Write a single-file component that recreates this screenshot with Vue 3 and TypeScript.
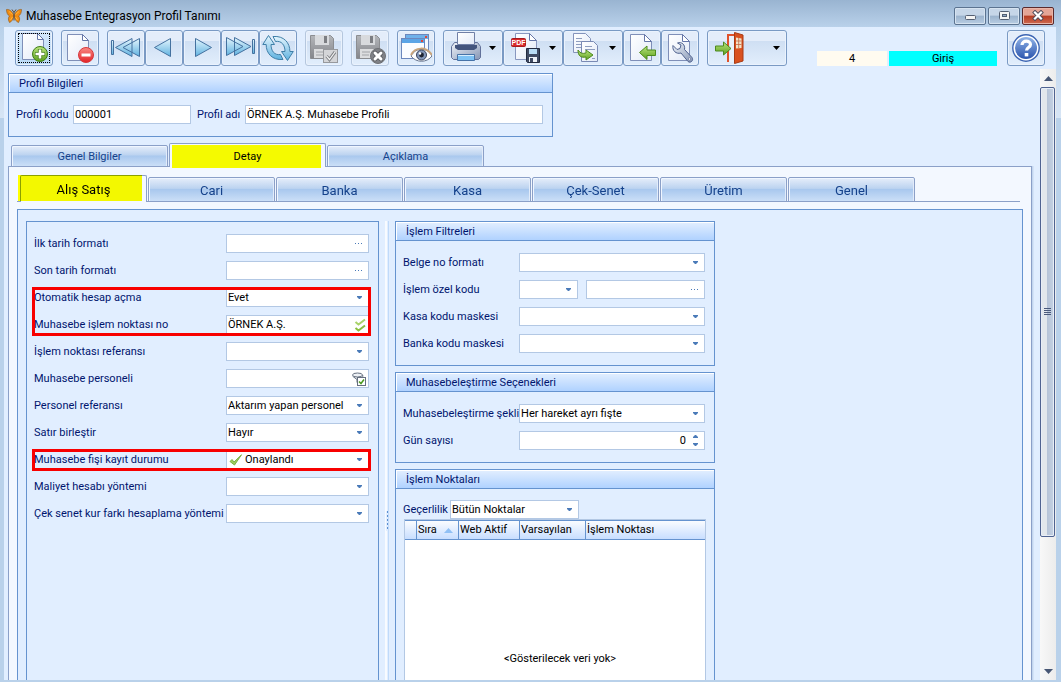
<script setup lang="ts">
import { ref } from 'vue'

type FieldKind = 'dots' | 'select' | 'checks' | 'funnel'

interface Field {
  id: string
  label: string
  kind: FieldKind
  value: string
  approved?: boolean
}

interface FieldGroup {
  marked: boolean
  fields: Field[]
}

const profileCode = ref('000001')
const profileName = ref('ÖRNEK A.Ş. Muhasebe Profili')

const outerTabs = ['Genel Bilgiler', 'Detay', 'Açıklama']
const activeOuter = ref('Detay')
const innerTabs = ['Alış Satış', 'Cari', 'Banka', 'Kasa', 'Çek-Senet', 'Üretim', 'Genel']
const activeInner = ref('Alış Satış')

const groups = ref<FieldGroup[]>([
  {
    marked: false,
    fields: [
      { id: 'ilk', label: 'İlk tarih formatı', kind: 'dots', value: '' },
      { id: 'son', label: 'Son tarih formatı', kind: 'dots', value: '' },
    ],
  },
  {
    marked: true,
    fields: [
      { id: 'otomatik', label: 'Otomatik hesap açma', kind: 'select', value: 'Evet' },
      { id: 'nokta', label: 'Muhasebe işlem noktası no', kind: 'checks', value: 'ÖRNEK A.Ş.' },
    ],
  },
  {
    marked: false,
    fields: [
      { id: 'noktaref', label: 'İşlem noktası referansı', kind: 'select', value: '' },
      { id: 'personel', label: 'Muhasebe personeli', kind: 'funnel', value: '' },
      { id: 'personelref', label: 'Personel referansı', kind: 'select', value: 'Aktarım yapan personel' },
      { id: 'satir', label: 'Satır birleştir', kind: 'select', value: 'Hayır' },
    ],
  },
  {
    marked: true,
    fields: [
      { id: 'durum', label: 'Muhasebe fişi kayıt durumu', kind: 'select', value: 'Onaylandı', approved: true },
    ],
  },
  {
    marked: false,
    fields: [
      { id: 'maliyet', label: 'Maliyet hesabı yöntemi', kind: 'select', value: '' },
      { id: 'kurfarki', label: 'Çek senet kur farkı hesaplama yöntemi', kind: 'select', value: '' },
    ],
  },
])

const days = ref(0)
</script>

<template>
  <div class="window">
    <svg class="defs" width="0" height="0" aria-hidden="true">
      <defs>
        <linearGradient id="gPage" x1="0" y1="0" x2="1" y2="1">
          <stop offset="0" stop-color="#ffffff" /><stop offset="1" stop-color="#e3eaf8" />
        </linearGradient>
        <linearGradient id="gBlue" x1="0" y1="0" x2="0" y2="1">
          <stop offset="0" stop-color="#e4f5fd" /><stop offset="1" stop-color="#5fb2e0" />
        </linearGradient>
        <linearGradient id="gGreen" x1="0" y1="0" x2="0" y2="1">
          <stop offset="0" stop-color="#b9e57c" /><stop offset="1" stop-color="#5c9f1e" />
        </linearGradient>
        <linearGradient id="gRed" x1="0" y1="0" x2="0" y2="1">
          <stop offset="0" stop-color="#f98a84" /><stop offset="1" stop-color="#e32227" />
        </linearGradient>
        <linearGradient id="gGrey" x1="0" y1="0" x2="0" y2="1">
          <stop offset="0" stop-color="#b4b6ba" /><stop offset="1" stop-color="#84868b" />
        </linearGradient>
        <linearGradient id="gHelp" x1="0" y1="0" x2="0" y2="1">
          <stop offset="0" stop-color="#8fb2e6" /><stop offset="1" stop-color="#2c55ae" />
        </linearGradient>
        <linearGradient id="gMetal" x1="0" y1="0" x2="1" y2="1">
          <stop offset="0" stop-color="#f0f4fa" /><stop offset="1" stop-color="#8595b4" />
        </linearGradient>
      </defs>
    </svg>

    <header class="titlebar">
      <svg class="logo" width="16" height="16" viewBox="0 0 16 16" aria-hidden="true">
        <path d="M7.500 6.500C6 3 3 1 .5 1.500c0 3 1 5.500 3 6.500C2 9.500 2 12 3.500 14.500c2-.5 3.500-3 4-5.500zM8.500 6.500C10 3 13 1 15.500 1.500c0 3-1 5.500-3 6.500 1.500 1.500 1.500 4 0 6.500-2-.5-3.500-3-4-5.500z" fill="#f08c14" stroke="#8a5212" stroke-width=".6" />
        <path d="M6.500 6.500 3 3.500M9.500 6.500 13 3.500M6.500 9l-2 3M9.500 9l2 3" stroke="#ffb43c" fill="none" />
        <path d="M8 4.500v8M6 1.500l2 3 2-3" stroke="#5a4630" stroke-width="1" fill="none" />
      </svg>
      <h1>Muhasebe Entegrasyon Profil Tanımı</h1>
      <div class="caption-buttons">
        <button type="button" aria-label="Simge durumuna küçült">
          <svg width="14" height="12" viewBox="0 0 14 12"><rect x="2.500" y="5.500" width="10" height="4" rx="1" fill="#f4f4f4" stroke="#545f72" /></svg>
        </button>
        <button type="button" aria-label="Ekranı kapla">
          <svg width="14" height="12" viewBox="0 0 14 12"><rect x="2.500" y="1.500" width="10" height="8" rx="1" fill="#f4f4f4" stroke="#545f72" /><rect x="5.500" y="4.500" width="4" height="2" fill="#8fa9c8" stroke="#545f72" /></svg>
        </button>
        <button type="button" class="close" aria-label="Kapat">
          <svg width="14" height="12" viewBox="0 0 14 12"><path d="M4 2.500 10 8.500M10 2.500 4 8.500" stroke="#4f4a58" stroke-width="4" stroke-linecap="square" /><path d="M4 2.500 10 8.500M10 2.500 4 8.500" stroke="#fff" stroke-width="2.200" stroke-linecap="square" /></svg>
        </button>
      </div>
    </header>

    <div class="client">
      <div class="toolbar">
        <button type="button" class="tool focused" aria-label="Yeni">
          <svg width="32" height="32" viewBox="0 0 32 32">
            <path d="M4.500 1.500h15l6 6v20h-21z" fill="url(#gPage)" stroke="#7f8fb8" />
            <path d="M19.500 1.500v6h6z" fill="#fff" stroke="#6576a8" />
            <circle cx="22" cy="22" r="7.500" fill="url(#gGreen)" stroke="#3f7d18" />
            <path d="M22 17v10M17 22h10" stroke="#477f1c" stroke-width="4.200" /><path d="M22 17.500v9M17.500 22h9" stroke="#fff" stroke-width="2.600" />
          </svg>
        </button>
        <button type="button" class="tool" aria-label="Sil">
          <svg width="32" height="32" viewBox="0 0 32 32">
            <path d="M3.500 2.500h15l6 6v20h-21z" fill="url(#gPage)" stroke="#7f8fb8" />
            <path d="M18.500 2.500v6h6z" fill="#fff" stroke="#6576a8" />
            <circle cx="22" cy="23" r="7.500" fill="url(#gRed)" stroke="#d8383c" />
            <rect x="17.500" y="21.500" width="9" height="3" fill="#fff" />
          </svg>
        </button>

        <div class="toolgroup">
          <button type="button" class="tool" aria-label="İlk kayıt">
            <svg width="32" height="32" viewBox="0 0 32 32" fill="url(#gBlue)" stroke="#44719f" stroke-linejoin="round">
              <rect x="1.500" y="8.500" width="2" height="14" /><path d="M5.500 15.500 22 6.500v18zM13 15.500 29.500 6.500v18z" />
            </svg>
          </button>
          <button type="button" class="tool" aria-label="Önceki kayıt">
            <svg width="32" height="32" viewBox="0 0 32 32" fill="url(#gBlue)" stroke="#44719f" stroke-linejoin="round"><path d="M6.500 15.500 22.500 6.500v18z" /></svg>
          </button>
          <button type="button" class="tool" aria-label="Sonraki kayıt">
            <svg width="32" height="32" viewBox="0 0 32 32" fill="url(#gBlue)" stroke="#44719f" stroke-linejoin="round"><path d="M25.500 15.500 9.500 6.500v18z" /></svg>
          </button>
          <button type="button" class="tool" aria-label="Son kayıt">
            <svg width="32" height="32" viewBox="0 0 32 32" fill="url(#gBlue)" stroke="#44719f" stroke-linejoin="round">
              <path d="M19 14.500 2.500 5.500v18zM27 14.500 10.500 5.500v18z" /><rect x="28.500" y="7.500" width="2" height="14" />
            </svg>
          </button>
          <button type="button" class="tool" aria-label="Yenile">
            <svg width="32" height="32" viewBox="0 0 32 32" fill="url(#gBlue)" stroke="#3f7fa8" stroke-linejoin="round">
              <path d="M6.500 3.500.8 12.500h3.400C4 21 10 28.500 21 27.500l-2.500-5C12.500 23.500 9 19 9 12.500h3.500z" />
              <path d="M25.500 28.500 31.300 19.500h-3.400C28 11 22 3.500 11 4.500l2.500 5C19.500 8.500 23 13 23 19.500h-3.500z" />
            </svg>
          </button>
        </div>

        <button type="button" class="tool" disabled aria-label="Kaydet">
          <svg width="32" height="32" viewBox="0 0 32 32">
            <path d="M2.500 3.500h20l3 3v20h-23z" fill="url(#gGrey)" stroke="#8b8d91" />
            <rect x="7" y="3" width="14" height="10" fill="#d8dadd" /><rect x="16" y="4" width="3" height="7" fill="#7c7e83" />
            <rect x="6" y="17" width="16" height="9" fill="#dcdddf" /><path d="M8 20h8M8 23h7" stroke="#a2a4a8" />
            <rect x="15.500" y="17.500" width="14" height="13" fill="#d4d5d8" stroke="#97999d" />
            <path d="m18.500 24 3 3.500 5.500-7.500" fill="none" stroke="#7e8084" stroke-width="3" /><path d="m18.500 24 3 3.500 5.500-7.500" fill="none" stroke="#f3f3f4" stroke-width="1.200" />
          </svg>
        </button>
        <button type="button" class="tool" disabled aria-label="Vazgeç">
          <svg width="32" height="32" viewBox="0 0 32 32">
            <path d="M2.500 3.500h20l3 3v20h-23z" fill="url(#gGrey)" stroke="#8b8d91" />
            <rect x="7" y="3" width="14" height="10" fill="#d8dadd" /><rect x="16" y="4" width="3" height="7" fill="#7c7e83" />
            <rect x="6" y="17" width="16" height="9" fill="#dcdddf" /><path d="M8 20h8M8 23h7" stroke="#a2a4a8" />
            <circle cx="24" cy="24" r="7.500" fill="#808287" stroke="#6f7175" />
            <path d="m21 21 6 6M27 21l-6 6" stroke="#5e6064" stroke-width="4.600" stroke-linecap="round" /><path d="m21 21 6 6M27 21l-6 6" stroke="#fff" stroke-width="3" stroke-linecap="round" />
          </svg>
        </button>
        <button type="button" class="tool" aria-label="İzle">
          <svg width="32" height="32" viewBox="0 0 32 32">
            <rect x="5.500" y="2.500" width="23" height="20" fill="#f6f9ff" stroke="#6c87bd" /><rect x="6" y="3" width="22" height="4" fill="#6fb1ea" /><rect x="25" y="4" width="2" height="2" fill="#e0483a" />
            <rect x="1.500" y="6.500" width="23" height="20" fill="#fbfcff" stroke="#6c87bd" /><rect x="2" y="7" width="22" height="4" fill="#5ba4e6" /><rect x="21" y="8" width="2" height="2" fill="#e0483a" />
            <path d="M11 24c5-9 16-9 21 0-5 7-16 7-21 0z" fill="#fff" stroke="#66748f" />
            <path d="M11 23c4-8 15-9 21 0" fill="none" stroke="#c9a57c" stroke-width="2" />
            <circle cx="21.500" cy="23" r="5" fill="#8296b8" stroke="#39455f" /><circle cx="21.500" cy="23" r="2.400" fill="#1d2331" /><circle cx="20" cy="21.500" r="1.200" fill="#fff" />
          </svg>
        </button>

        <div class="toolgroup">
          <button type="button" class="tool menu" aria-label="Yazdır">
            <svg width="32" height="32" viewBox="0 0 32 32">
              <path d="M4.500 10.500h23l3 4v11l-2 2h-25l-2-2v-11z" fill="url(#gMetal)" stroke="#62719a" />
              <path d="M7.500.5h17v12h-17z" fill="url(#gPage)" stroke="#707fa6" /><path d="M5 13h22v3l-3 2H8l-3-2z" fill="#43547d" />
              <path d="M7.500 22.500h17v6h-17z" fill="#7ec2f4" stroke="#4773a8" /><path d="M8 23.500h16" stroke="#d6edfd" />
            </svg>
            <svg class="arrow" width="7" height="4" viewBox="0 0 7 4"><path d="M0 0h7L3.500 4z" /></svg>
          </button>
          <button type="button" class="tool menu" aria-label="PDF olarak kaydet">
            <svg width="32" height="32" viewBox="0 0 32 32">
              <path d="M5.500 1.500h14l7 7v19h-21z" fill="url(#gPage)" stroke="#8897bf" /><path d="M19.500 1.500v7h7z" fill="#fff" stroke="#6576a8" />
              <rect x="1.500" y="6.500" width="14" height="8" rx="1" fill="#d92b2b" stroke="#a51b1f" />
              <text x="8.500" y="13" text-anchor="middle" font-family="Liberation Sans, sans-serif" font-size="7" font-weight="bold" fill="#fff">PDF</text>
              <path d="M16.500 16.500h13v14h-12l-1-1z" fill="#3f4a63" stroke="#222b40" /><rect x="19" y="17" width="8" height="5" fill="#b9dcf5" /><rect x="19" y="25" width="8" height="5" fill="#eef2f8" /><rect x="20" y="26" width="3" height="4" fill="#3f4a63" />
            </svg>
            <svg class="arrow" width="7" height="4" viewBox="0 0 7 4"><path d="M0 0h7L3.500 4z" /></svg>
          </button>
          <button type="button" class="tool menu" aria-label="Kopyala">
            <svg width="32" height="32" viewBox="0 0 32 32">
              <path d="M3.500 1.500h12l5 5v14h-17z" fill="url(#gPage)" stroke="#8493bb" /><path d="M6 6.500h6M6 9.500h9M6 12.500h5M6 15.500h5" stroke="#8e9dbf" />
              <path d="M11.500 9.500h12l4 4v16h-16z" fill="url(#gPage)" stroke="#7a8ab4" /><path d="M15 14.500h7M15 17.500h10M22 26.500h3" stroke="#8e9dbf" />
              <path d="M8 18c2 3 4 4 8 3v-3l7 5-7 5v-3c-5 1-8-1-8-7z" fill="url(#gGreen)" stroke="#4d8a1e" />
            </svg>
            <svg class="arrow" width="7" height="4" viewBox="0 0 7 4"><path d="M0 0h7L3.500 4z" /></svg>
          </button>
          <button type="button" class="tool" aria-label="İçe aktar">
            <svg width="32" height="32" viewBox="0 0 32 32">
              <path d="M4.500 2.500h14l7 7v19h-21z" fill="url(#gPage)" stroke="#7f8fb8" /><path d="M18.500 2.500v7h7z" fill="#fff" stroke="#6576a8" />
              <path d="M13.500 20.500 21 14v4h8.500v5.500H21v4z" fill="url(#gGreen)" stroke="#4d8a1e" />
            </svg>
          </button>
          <button type="button" class="tool" aria-label="Ayarlar">
            <svg width="32" height="32" viewBox="0 0 32 32">
              <path d="M4.500 2.500h14l7 7v19h-21z" fill="url(#gPage)" stroke="#7f8fb8" /><path d="M18.500 2.500v7h7z" fill="#fff" stroke="#6576a8" />
              <path d="M9 13.500l4 4 3-1 1-3.500-3.500-2c4-1.500 8 1.500 7 6.500l7.500 8c2 3-1.500 6-4 4L17 21c-5 1.500-9-2.500-8-7.500z" fill="url(#gMetal)" stroke="#50628f" /><circle cx="25.500" cy="27" r="1.200" fill="#fff" stroke="#50628f" stroke-width=".6" />
            </svg>
          </button>
        </div>

        <button type="button" class="tool menu exit" aria-label="Çıkış">
          <svg width="32" height="32" viewBox="0 0 32 32">
            <path d="M14 30V3h8" fill="none" stroke="#e0522b" stroke-width="2" /><path d="M15.500 30V4.500h5V30z" fill="#e9f1fb" />
            <path d="M20.500.5 29 3v26l-8.500 2.500z" fill="#d9511f" stroke="#a93b14" />
            <path d="M22 5.500 27.500 6.500v9.500L22 16.500z" fill="#f3e3c8" /><path d="M24.700 6v10M22 9h5.500M22 12.500h5.500" stroke="#c46a44" stroke-width=".8" />
            <path d="M1.500 14h8v-4l7.500 6.500-7.500 6.500v-4h-8z" fill="url(#gGreen)" stroke="#4d8a1e" />
          </svg>
          <svg class="arrow" width="7" height="4" viewBox="0 0 7 4"><path d="M0 0h7L3.500 4z" /></svg>
        </button>

        <div class="status">
          <span class="count">4</span>
          <span class="mode">Giriş</span>
        </div>
        <button type="button" class="tool help" aria-label="Yardım">
          <svg width="32" height="32" viewBox="0 0 32 32">
            <circle cx="16" cy="16" r="13.200" fill="#fff" stroke="#3d65b3" stroke-width="1.400" /><circle cx="16" cy="16" r="11" fill="url(#gHelp)" />
            <path d="M12 13c0-5 8.500-5 8.500-.5 0 3-4 3-4 6" fill="none" stroke="#fff" stroke-width="3.200" /><rect x="14.700" y="21" width="3.600" height="3.400" fill="#fff" />
          </svg>
        </button>
      </div>

      <div class="scroller">
        <main>
          <section class="group profile">
            <h2>Profil Bilgileri</h2>
            <div class="profile-row">
              <label for="kod">Profil kodu</label>
              <div class="control code"><input id="kod" v-model="profileCode" type="text" /></div>
              <label for="ad">Profil adı</label>
              <div class="control"><input id="ad" v-model="profileName" type="text" /></div>
            </div>
          </section>

          <div class="tabs outer" role="tablist">
            <button
              v-for="t in outerTabs" :key="t" type="button" role="tab"
              :aria-selected="t === activeOuter" :class="{ active: t === activeOuter }" @click="activeOuter = t"
            ><span>{{ t }}</span></button>
          </div>

          <div class="outer-panel">
            <div class="tabs inner" role="tablist">
              <button
                v-for="t in innerTabs" :key="t" type="button" role="tab"
                :aria-selected="t === activeInner" :class="{ active: t === activeInner }" @click="activeInner = t"
              ><span>{{ t }}</span></button>
            </div>

            <div class="inner-panel">
              <form class="group fields" @submit.prevent>
                <div v-for="(g, i) in groups" :key="i" class="block" :class="{ marked: g.marked }">
                  <div v-for="f in g.fields" :key="f.id" class="row">
                    <label :for="f.id">{{ f.label }}</label>
                    <div class="control" :class="{ approved: f.approved }">
                      <svg v-if="f.approved" class="tick" width="14" height="12" viewBox="0 0 14 12"><path d="M1 7.500 3 5.500l2 2.500L12.500.8 5.500 11z" fill="#9ccb5c" stroke="#7fb043" /></svg>
                      <select v-if="f.kind === 'select'" :id="f.id" v-model="f.value">
                        <option>{{ f.value }}</option>
                      </select>
                      <input v-else :id="f.id" v-model="f.value" type="text" />
                      <svg v-if="f.kind === 'select'" class="mark" width="5" height="3" viewBox="0 0 5 3"><path d="M0 0h5v1L3 3H2L0 1z" fill="#4a7ab8" /></svg>
                      <span v-else-if="f.kind === 'dots'" class="mark dots"></span>
                      <svg v-else-if="f.kind === 'checks'" class="mark near" width="12" height="14" viewBox="0 0 12 14" fill="none" stroke="#a9d36a" stroke-width="2"><path d="m1.500 4 3 2.500L11 1.500" /><path d="m1.500 10 3 2.500L11 7.500" stroke="#8abf40" /></svg>
                      <svg v-else class="mark near" width="14" height="14" viewBox="0 0 14 14" fill="#eef1f5" stroke="#66707f"><path d="M1 3.500v1l4 3v3l2 1.500V8l4-3.500v-1z" /><ellipse cx="5.500" cy="3" rx="5" ry="2" /><rect x="5.500" y="5.500" width="8" height="8" fill="#fff" /><path d="m7 9.500 2 2 3-4" stroke="#4c9a20" stroke-width="1.500" fill="none" /></svg>
                    </div>
                  </div>
                </div>
              </form>

              <div class="splitter" role="separator"><i></i></div>

              <div class="side">
                <section class="group">
                  <h2>İşlem Filtreleri</h2>
                  <div class="body">
                    <div class="row">
                      <label for="belge">Belge no formatı</label>
                      <div class="control"><select id="belge"><option></option></select><svg class="mark" width="5" height="3" viewBox="0 0 5 3"><path d="M0 0h5v1L3 3H2L0 1z" fill="#4a7ab8" /></svg></div>
                    </div>
                    <div class="row">
                      <label for="ozel">İşlem özel kodu</label>
                      <div class="control short"><select id="ozel"><option></option></select><svg class="mark" width="5" height="3" viewBox="0 0 5 3"><path d="M0 0h5v1L3 3H2L0 1z" fill="#4a7ab8" /></svg></div>
                      <div class="control"><input type="text" aria-label="İşlem özel kodu değeri" /><span class="mark dots"></span></div>
                    </div>
                    <div class="row">
                      <label for="kasa">Kasa kodu maskesi</label>
                      <div class="control"><select id="kasa"><option></option></select><svg class="mark" width="5" height="3" viewBox="0 0 5 3"><path d="M0 0h5v1L3 3H2L0 1z" fill="#4a7ab8" /></svg></div>
                    </div>
                    <div class="row">
                      <label for="banka">Banka kodu maskesi</label>
                      <div class="control"><select id="banka"><option></option></select><svg class="mark" width="5" height="3" viewBox="0 0 5 3"><path d="M0 0h5v1L3 3H2L0 1z" fill="#4a7ab8" /></svg></div>
                    </div>
                  </div>
                </section>

                <section class="group">
                  <h2>Muhasebeleştirme Seçenekleri</h2>
                  <div class="body">
                    <div class="row">
                      <label for="sekil">Muhasebeleştirme şekli</label>
                      <div class="control"><select id="sekil"><option>Her hareket ayrı fişte</option></select><svg class="mark" width="5" height="3" viewBox="0 0 5 3"><path d="M0 0h5v1L3 3H2L0 1z" fill="#4a7ab8" /></svg></div>
                    </div>
                    <div class="row">
                      <label for="gun">Gün sayısı</label>
                      <div class="control number">
                        <input id="gun" v-model="days" type="number" />
                        <svg class="mark" width="5" height="11" viewBox="0 0 5 11" fill="#4a7ab8"><path d="M0 3V2L2 0h1l2 2v1zM0 8v1l2 2h1l2-2V8z" /></svg>
                      </div>
                    </div>
                  </div>
                </section>

                <section class="group points">
                  <h2>İşlem Noktaları</h2>
                  <div class="body">
                    <div class="row">
                      <label for="gecerlilik">Geçerlilik</label>
                      <div class="control"><select id="gecerlilik"><option>Bütün Noktalar</option></select><svg class="mark" width="5" height="3" viewBox="0 0 5 3"><path d="M0 0h5v1L3 3H2L0 1z" fill="#4a7ab8" /></svg></div>
                    </div>
                    <div class="gridbox">
                      <table>
                        <colgroup><col class="c0" /><col class="c1" /><col class="c2" /><col class="c3" /><col /></colgroup>
                        <thead>
                          <tr>
                            <th aria-label="Seçim"></th>
                            <th><div class="sorted">Sıra<svg width="9" height="5" viewBox="0 0 9 5"><path d="M0 5 4.500 0 9 5z" fill="#90c0f5" /></svg></div></th>
                            <th>Web Aktif</th>
                            <th>Varsayılan</th>
                            <th>İşlem Noktası</th>
                          </tr>
                        </thead>
                      </table>
                      <p>&lt;Gösterilecek veri yok&gt;</p>
                    </div>
                  </div>
                </section>
              </div>
            </div>
          </div>
        </main>

        <div class="scrollbar">
          <button type="button" aria-label="Yukarı kaydır"><svg width="9" height="5" viewBox="0 0 9 5"><path d="M0 5 4.500 0 9 5z" fill="#475674" /></svg></button>
          <div class="thumb"><i></i></div>
          <div class="rest"></div>
          <button type="button" aria-label="Aşağı kaydır"><svg width="9" height="5" viewBox="0 0 9 5"><path d="M0 0h9L4.500 5z" fill="#475674" /></svg></button>
        </div>
      </div>
    </div>
  </div>
</template>

<style>
body { margin: 0; }
</style>

<style scoped>
* { box-sizing: border-box; }
.window {
  --line: #6593cf;
  --edge: #b3c8e4;
  --navy: #00156e;
  --face: #e1eeff;
  height: 100vh;
  display: flex;
  flex-direction: column;
  padding: 0 5px 2px 4px;
  overflow: hidden;
  background: linear-gradient(#99b4d1 0, #b9d1ea 27px, #d7e5f5 118px, #b9d1ea 118px);
  font: 11px/14px Roboto, "Noto Sans", sans-serif;
  color: #000;
}
.defs { position: absolute; }
button, input, select { font: inherit; color: inherit; margin: 0; }
button { padding: 0; }

.titlebar { flex: none; height: 27px; display: flex; align-items: center; padding: 4px 2px 0 2px; gap: 4px; }
.titlebar h1 { flex: 1; margin: 0; font-size: 12px; font-weight: normal; line-height: 16px; }
.caption-buttons { display: flex; gap: 2px; }
.caption-buttons button {
  width: 32px; height: 18px; display: grid; place-items: center;
  border: 1px solid #5b7390; border-radius: 2px;
  background: linear-gradient(#c6d6e8 45%, #9bb3cd 50%, #b8cde3);
  box-shadow: inset 0 0 0 1px #d6e3f0;
}
.caption-buttons .close {
  border-color: #5a2a2c;
  background: linear-gradient(#e4a596 45%, #b63c22 50%, #cf6a50);
  box-shadow: inset 0 0 0 1px #e9b5a8;
}

.client { flex: 1; min-height: 0; display: flex; flex-direction: column; background: var(--face); }
.toolbar { flex: none; display: flex; align-items: center; gap: 8px; padding: 3px 11px; }
.toolgroup { display: flex; }
.tool {
  width: 38px; height: 36px; display: flex; align-items: center; justify-content: center;
  border: 1px solid #7a9ac4; border-radius: 3px;
  background: linear-gradient(#e4edfa 28%, #cfdff3 30%, #e2eefc);
  box-shadow: inset 0 0 0 1px #eaf2fd;
}
.tool:disabled { border-color: #b5c7de; }
.focused { outline: 1px dotted #000; outline-offset: -4px; background: linear-gradient(#d6e8fb, #b9d9f5); }
.menu { width: 60px; justify-content: space-between; padding: 0 6px; }
.exit { width: 80px; }
.status { margin-left: auto; margin-right: 2px; display: flex; gap: 2px; padding-top: 21px; text-align: center; line-height: 16px; }
.status span { height: 15px; }
.count { width: 70px; background: #fffbf0; }
.mode { width: 108px; background: #0ff; }

.scroller { flex: 1; min-height: 0; display: flex; }
main { flex: 1; min-width: 0; display: flex; flex-direction: column; padding: 4px 8px 0 4px; overflow: hidden; }

.group { border: 1px solid var(--line); background: var(--face); }
.group h2 {
  margin: 0; height: 19px; padding-left: 10px;
  border-bottom: 1px solid var(--line); box-shadow: inset 1px 1px 0 #fff;
  background: linear-gradient(#e3efff, #b0d2ff);
  font-size: 11px; font-weight: normal; line-height: 19px; color: var(--navy);
}
label { color: var(--navy); white-space: nowrap; line-height: 19px; }

.control {
  position: relative; flex: 1; min-width: 0; height: 19px; display: flex; align-items: center;
  border: 1px solid var(--edge); background: #fff;
}
.control input, .control select {
  width: 100%; height: 17px; min-width: 0; padding: 0 1px; border: 0; outline: 0;
  background: transparent; appearance: none; line-height: 17px;
}
.mark { position: absolute; right: 6px; pointer-events: none; }
.mark.near { right: 2px; }
.mark.dots { right: 5px; }
.dots { width: 8px; height: 1px; background: repeating-linear-gradient(90deg, #4a7ab8 0 1px, transparent 1px 3px); }
.approved { padding-left: 2px; }
.approved select { padding-left: 2px; }
.tick { flex: none; }
.number input { text-align: right; padding-right: 18px; appearance: textfield; }
.number input::-webkit-inner-spin-button { appearance: none; margin: 0; }

.profile { flex: none; width: 545px; }
.profile-row { display: flex; padding: 12px 9px 12px 7px; }
.profile-row label { flex: 0 0 57px; }
.profile-row .code { flex: 0 0 118px; margin-right: 6px; }
.profile-row .code + label { flex-basis: 48px; }

.tabs { position: relative; z-index: 1; flex: none; display: flex; align-items: flex-end; gap: 1px; }
.tabs button {
  position: relative; height: 22px; width: 157px; padding-top: 2px;
  border: 1px solid #8ba0c8; border-radius: 2px 2px 0 0; box-shadow: inset 1px 1px 0 #f0f6ff, inset -1px 0 0 #e2ecfa;
  background: linear-gradient(#e6eefa, #bcd3f0 45%, #a9c8ee 50%, #cbdff7);
  color: #15428b;
}
.tabs span { position: relative; }
.tabs .active { border-bottom: 0; background: #f3f8ff; box-shadow: none; color: #000; }
.tabs .active::before { content: ""; position: absolute; background: #f5fa00; }
.outer { height: 24px; margin: 6px 0 -1px; padding-left: 3px; }
.outer .active { height: 24px; }
.outer .active::before { inset: 1px 4px -1px 2px; }
.inner { height: 27px; margin-right: 3px; padding-left: 3px; border-bottom: 1px solid #8ba0c8; font-size: 13px; }
.inner button { width: 127px; height: 25px; margin-bottom: -1px; flex: none; }
.inner .active { height: 27px; }
.inner .active::before { inset: -1px 4px 1px -3px; background: #ff0; mix-blend-mode: multiply; }

.outer-panel {
  flex: 1; min-height: 0; display: flex; flex-direction: column; padding: 8px 8px 0;
  border: 1px solid #8ba0c8; border-bottom: 0; background: #f3f8ff; box-shadow: 1px 0 0 #c3d6ef, 2px 0 0 #d3e3f8;
}
.inner-panel {
  flex: 1; min-height: 0; display: flex; gap: 6px; margin-top: 7px; padding: 11px 8px 0;
  border: 1px solid var(--line); border-bottom: 0; background: var(--face);
}
.fields { flex: 0 0 353px; border-bottom: 0; padding: 12px 9px 0 7px; display: flex; flex-direction: column; gap: 8px; }
.block { position: relative; display: flex; flex-direction: column; gap: 8px; }
.marked::after { content: ""; position: absolute; inset: -1px -2px -2px; border: 3px solid #f80000; pointer-events: none; }
.row { display: flex; }
.fields label { flex: 0 0 192px; }

.splitter { flex: 0 0 4px; display: grid; align-items: start; justify-items: end; border-left: 2px solid #f8fbff; border-right: 1px solid #c0dafa; }
.splitter i { width: 1px; height: 20px; margin-top: 290px; background: repeating-linear-gradient(#5c8fd0 0 2px, transparent 2px 4px); box-shadow: -1px 0 0 var(--face); }

.side { flex: 0 0 320px; display: flex; flex-direction: column; gap: 6px; min-height: 0; }
.side .group { flex: none; }
.body { display: flex; flex-direction: column; gap: 8px; padding: 12px 9px 12px 7px; }
.body label { flex: 0 0 116px; }
.body .short { flex: 0 0 59px; margin-right: 8px; }
.side .points { flex: 1; min-height: 0; display: flex; flex-direction: column; border-bottom: 0; }
.points .body { flex: 1; min-height: 0; gap: 0; padding: 11px 8px 0 7px; }
.points label { flex-basis: 47px; }
.points .control { flex: 0 0 129px; }
.gridbox {
  flex: 1; min-height: 0; display: flex; flex-direction: column; justify-content: space-between;
  margin-left: 1px; border: 1px solid var(--edge); border-bottom: 0; background: #fff;
}
table { width: 100%; table-layout: fixed; border-collapse: separate; border-spacing: 0; }
.c0 { width: 12px; }
.c1 { width: 42px; }
.c2 { width: 61px; }
.c3 { width: 66px; }
th {
  height: 20px; padding: 0 0 0 1px; text-align: left; font-weight: normal; white-space: nowrap;
  border: solid var(--line); border-width: 1px 1px 1px 0; background: linear-gradient(#fafcff, #c8deff);
}
th:last-child { border-right: 0; }
.sorted { display: flex; align-items: center; justify-content: space-between; padding-right: 5px; }
.gridbox p { margin: 0 0 14px; text-align: center; padding-left: 10px; }

.scrollbar { flex: 0 0 16px; display: flex; flex-direction: column; background: linear-gradient(90deg, #f8f8f8, #ececec); }
.scrollbar button { height: 18px; border: 0; background: transparent; display: grid; place-items: center; }
.thumb {
  flex: 18; width: 15px; display: grid; place-items: center;
  border: 1px solid #4f6391; border-radius: 2px; box-shadow: inset 0 0 0 1px #e8eef6;
  background: linear-gradient(90deg, #e2e7ec 45%, #b6c4d8 50%, #c5d2e4);
}
.thumb i { width: 7px; height: 8px; background: repeating-linear-gradient(#4a5a7c 0 1px, transparent 1px 2px); }
.rest { flex: 5; }
</style>
